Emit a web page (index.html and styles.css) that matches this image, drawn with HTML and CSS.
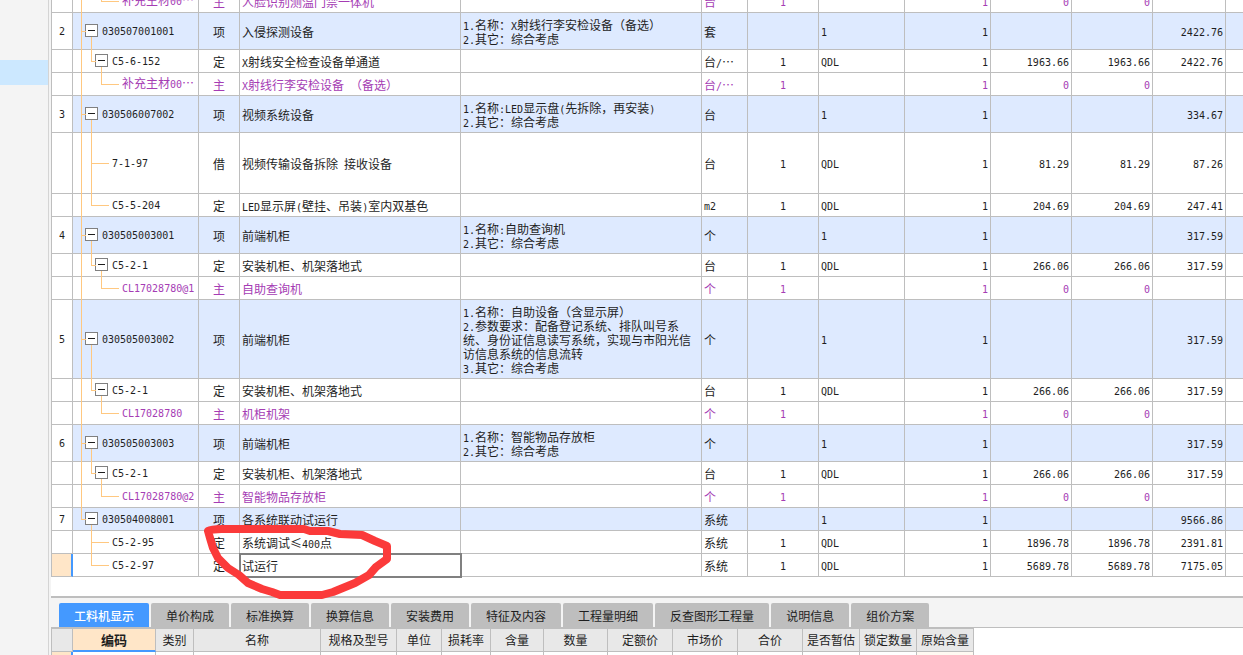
FILE: index.html
```html
<!DOCTYPE html>
<html lang="zh-CN">
<head>
<meta charset="utf-8">
<title>工料机显示</title>
<link rel="stylesheet" href="styles.css">
</head>
<body>
<div class="app">
  <aside class="sidebar"><div class="sidebar-item"></div></aside>
  <main class="main">
    <section class="items">
      <table class="grid">
        <colgroup><col class="w-no"><col class="w-code"><col class="w-type"><col class="w-name"><col class="w-feature"><col class="w-unit"><col class="w-content"><col class="w-formula"><col class="w-qty"><col class="w-price"><col class="w-price"><col class="w-total"><col></colgroup>
        <tbody>
          <tr class="main-mat"><td></td><td class="tree leaf2"><span class="cn">补充主材</span>00<span class="cn">…</span></td><td class="type">主</td><td class="cn">人脸识别测温门禁一体机</td><td></td><td class="cn">台</td><td class="mid">1</td><td></td><td class="num">1</td><td class="num">0</td><td class="num">0</td><td></td><td></td></tr>
          <tr class="item h2"><td class="no">2</td><td class="tree root"><div><button aria-label="折叠"></button>030507001001</div></td><td class="type">项</td><td class="cn">入侵探测设备</td><td class="cn feature"><span class="m">1.</span>名称：<span class="m">X</span>射线行李安检设备（备选）<br><span class="m">2.</span>其它：综合考虑</td><td class="cn">套</td><td></td><td>1</td><td class="num">1</td><td></td><td></td><td class="num">2422.76</td><td></td></tr>
          <tr><td></td><td class="tree branch"><div><button aria-label="折叠"></button>C5-6-152</div></td><td class="type">定</td><td class="cn"><span class="m">X</span>射线安全检查设备单通道</td><td></td><td class="cn">台<span class="m">/</span>…</td><td class="mid">1</td><td>QDL</td><td class="num">1</td><td class="num">1963.66</td><td class="num">1963.66</td><td class="num">2422.76</td><td></td></tr>
          <tr class="main-mat"><td></td><td class="tree leaf2"><span class="cn">补充主材</span>00<span class="cn">…</span></td><td class="type">主</td><td class="cn"><span class="m">X</span>射线行李安检设备<span class="m"> </span>（备选）</td><td></td><td class="cn">台<span class="m">/</span>…</td><td class="mid">1</td><td></td><td class="num">1</td><td class="num">0</td><td class="num">0</td><td></td><td></td></tr>
          <tr class="item h2"><td class="no">3</td><td class="tree root"><div><button aria-label="折叠"></button>030506007002</div></td><td class="type">项</td><td class="cn">视频系统设备</td><td class="cn feature"><span class="m">1.</span>名称<span class="m">:LED</span>显示盘<span class="m">(</span>先拆除，再安装<span class="m">)</span><br><span class="m">2.</span>其它：综合考虑</td><td class="cn">台</td><td></td><td>1</td><td class="num">1</td><td></td><td></td><td class="num">334.67</td><td></td></tr>
          <tr class="h3"><td></td><td class="tree leaf1"><div>7-1-97</div></td><td class="type">借</td><td class="cn">视频传输设备拆除<span class="m"> </span>接收设备</td><td></td><td class="cn">台</td><td class="mid">1</td><td>QDL</td><td class="num">1</td><td class="num">81.29</td><td class="num">81.29</td><td class="num">87.26</td><td></td></tr>
          <tr><td></td><td class="tree leaf1">C5-5-204</td><td class="type">定</td><td class="cn"><span class="m">LED</span>显示屏<span class="m">(</span>壁挂、吊装<span class="m">)</span>室内双基色</td><td></td><td>m2</td><td class="mid">1</td><td>QDL</td><td class="num">1</td><td class="num">204.69</td><td class="num">204.69</td><td class="num">247.41</td><td></td></tr>
          <tr class="item h2"><td class="no">4</td><td class="tree root"><div><button aria-label="折叠"></button>030505003001</div></td><td class="type">项</td><td class="cn">前端机柜</td><td class="cn feature"><span class="m">1.</span>名称<span class="m">:</span>自助查询机<br><span class="m">2.</span>其它：综合考虑</td><td class="cn">个</td><td></td><td>1</td><td class="num">1</td><td></td><td></td><td class="num">317.59</td><td></td></tr>
          <tr><td></td><td class="tree branch"><div><button aria-label="折叠"></button>C5-2-1</div></td><td class="type">定</td><td class="cn">安装机柜、机架落地式</td><td></td><td class="cn">台</td><td class="mid">1</td><td>QDL</td><td class="num">1</td><td class="num">266.06</td><td class="num">266.06</td><td class="num">317.59</td><td></td></tr>
          <tr class="main-mat"><td></td><td class="tree leaf2">CL17028780@1</td><td class="type">主</td><td class="cn">自助查询机</td><td></td><td class="cn">个</td><td class="mid">1</td><td></td><td class="num">1</td><td class="num">0</td><td class="num">0</td><td></td><td></td></tr>
          <tr class="item h4"><td class="no">5</td><td class="tree root"><div><button aria-label="折叠"></button>030505003002</div></td><td class="type">项</td><td class="cn">前端机柜</td><td class="cn feature"><span class="m">1.</span>名称：自助设备（含显示屏）<br><span class="m">2.</span>参数要求：配备登记系统、排队叫号系统、身份证信息读写系统，实现与市阳光信访信息系统的信息流转<br><span class="m">3.</span>其它：综合考虑</td><td class="cn">个</td><td></td><td>1</td><td class="num">1</td><td></td><td></td><td class="num">317.59</td><td></td></tr>
          <tr><td></td><td class="tree branch"><div><button aria-label="折叠"></button>C5-2-1</div></td><td class="type">定</td><td class="cn">安装机柜、机架落地式</td><td></td><td class="cn">台</td><td class="mid">1</td><td>QDL</td><td class="num">1</td><td class="num">266.06</td><td class="num">266.06</td><td class="num">317.59</td><td></td></tr>
          <tr class="main-mat"><td></td><td class="tree leaf2">CL17028780</td><td class="type">主</td><td class="cn">机柜机架</td><td></td><td class="cn">个</td><td class="mid">1</td><td></td><td class="num">1</td><td class="num">0</td><td class="num">0</td><td></td><td></td></tr>
          <tr class="item h2"><td class="no">6</td><td class="tree root"><div><button aria-label="折叠"></button>030505003003</div></td><td class="type">项</td><td class="cn">前端机柜</td><td class="cn feature"><span class="m">1.</span>名称：智能物品存放柜<br><span class="m">2.</span>其它：综合考虑</td><td class="cn">个</td><td></td><td>1</td><td class="num">1</td><td></td><td></td><td class="num">317.59</td><td></td></tr>
          <tr><td></td><td class="tree branch"><div><button aria-label="折叠"></button>C5-2-1</div></td><td class="type">定</td><td class="cn">安装机柜、机架落地式</td><td></td><td class="cn">台</td><td class="mid">1</td><td>QDL</td><td class="num">1</td><td class="num">266.06</td><td class="num">266.06</td><td class="num">317.59</td><td></td></tr>
          <tr class="main-mat"><td></td><td class="tree leaf2">CL17028780@2</td><td class="type">主</td><td class="cn">智能物品存放柜</td><td></td><td class="cn">个</td><td class="mid">1</td><td></td><td class="num">1</td><td class="num">0</td><td class="num">0</td><td></td><td></td></tr>
          <tr class="item"><td class="no">7</td><td class="tree root last"><div><button aria-label="折叠"></button>030504008001</div></td><td class="type">项</td><td class="cn">各系统联动试运行</td><td></td><td class="cn">系统</td><td></td><td>1</td><td class="num">1</td><td></td><td></td><td class="num">9566.86</td><td></td></tr>
          <tr><td></td><td class="tree leaf1 last"><div>C5-2-95</div></td><td class="type">定</td><td class="cn">系统调试≤<span class="m">400</span>点</td><td></td><td class="cn">系统</td><td class="mid">1</td><td>QDL</td><td class="num">1</td><td class="num">1896.78</td><td class="num">1896.78</td><td class="num">2391.81</td><td></td></tr>
          <tr><td class="no current"></td><td class="tree leaf1 last">C5-2-97</td><td class="type">定</td><td class="cn selected">试运行</td><td></td><td class="cn">系统</td><td class="mid">1</td><td>QDL</td><td class="num">1</td><td class="num">5689.78</td><td class="num">5689.78</td><td class="num">7175.05</td><td></td></tr>
        </tbody>
      </table>
    </section>
    <nav class="tabs">
      <button class="tab active">工料机显示</button><button class="tab">单价构成</button><button class="tab">标准换算</button><button class="tab">换算信息</button><button class="tab">安装费用</button><button class="tab">特征及内容</button><button class="tab">工程量明细</button><button class="tab">反查图形工程量</button><button class="tab">说明信息</button><button class="tab">组价方案</button>
    </nav>
    <section class="detail">
      <table class="resources">
        <colgroup><col class="r21"><col class="r83"><col class="r38"><col class="r127"><col class="r76"><col class="r45"><col class="r49"><col class="r53"><col class="r64"><col class="r65"><col class="r65"><col class="r65"><col class="r57"><col class="r57"><col class="r57"></colgroup>
        <thead><tr><th></th><th class="sorted">编码</th><th>类别</th><th>名称</th><th>规格及型号</th><th>单位</th><th>损耗率</th><th>含量</th><th>数量</th><th>定额价</th><th>市场价</th><th>合价</th><th>是否暂估</th><th>锁定数量</th><th>原始含量</th></tr></thead>
        <tbody><tr><td class="current"></td><td></td><td></td><td></td><td></td><td></td><td></td><td></td><td></td><td></td><td></td><td></td><td></td><td></td><td class="editable"></td></tr></tbody>
      </table>
    </section>
  </main>
  <svg class="mark" width="200" height="84" viewBox="200 520 200 84" aria-hidden="true"><path d="M208 531C213 528 220 529 230 529L304 529L310 531L328 531L340 534L362 535L375 541L387 546L387 559L376 567L369 575L355 583L333 592L322 595L280 595L272 592L262 589L248 583L239 575L228 568L218 558L213 548L210 538Z"/></svg>
</div>
</body>
</html>
```
FILE: styles.css
```css
* { box-sizing: border-box; }

body {
  margin: 0;
  background: #fff;
  color: #1e1e1e;
  font-family: "DejaVu Sans Mono", "Noto Sans CJK SC", monospace;
  font-size: 10px;
  line-height: 14px;
}

.app {
  display: flex;
  position: relative;
  height: 100vh;
  overflow: hidden;
}

.sidebar {
  flex: none;
  width: 49px;
  padding-top: 60px;
  background: #f4f4f4;
  border-right: 1px solid #d4d4d4;
}
.sidebar-item { height: 25px; background: #cce8ff; }

.main {
  flex: 1;
  min-width: 0;
  border-left: 2px solid #f4f4f4;
}

/* bill of quantities */
.items {
  overflow: hidden;
  padding-bottom: 19px;
  border-bottom: 2px solid #bebebe;
}
.grid, .resources {
  table-layout: fixed;
  border-collapse: separate;
  border-spacing: 0;
  border-left: 1px solid #bebebe;
}
.grid { width: 100%; margin-top: -10px; }
.w-no { width: 21px; }
.w-code { width: 126px; }
.w-type { width: 41px; }
.w-name { width: 221px; }
.w-feature { width: 241px; }
.w-unit { width: 46px; }
.w-content { width: 71px; }
.w-formula, .w-qty { width: 86px; }
.w-price { width: 81px; }
.w-total { width: 73px; }

.grid td {
  height: 23px;
  padding: 3px 2px 0;
  border-right: 1px solid #bebebe;
  border-bottom: 1px solid #bebebe;
  white-space: nowrap;
  overflow: hidden;
}
.grid .h2 td { height: 37px; }
.grid .h3 td { height: 61px; }
.grid .h4 td { height: 79px; }
.grid td:last-child { border-right: 0; }

.item td { background-color: #deeaff; }
.grid .no, .item .no { padding: 1px 0 0; text-align: center; background-color: #fff; }
.main-mat { color: #a53cb4; }

.grid .cn, .grid .type {
  padding-top: 1px;
  font-family: "Noto Sans CJK SC", sans-serif;
  font-size: 12px;
}
.grid .type, .grid .mid { text-align: center; }
.grid .num { text-align: right; }
.grid .feature { white-space: normal; padding: 1px 8px 0 2px; }
.m {
  font-family: "DejaVu Sans Mono", monospace;
  font-size: 10px;
  line-height: 0;
  white-space: pre;
}

/* tree column and its guides */
.grid .tree {
  position: relative;
  padding: 2px 0 0;
  overflow: visible;
}
.tree .cn { line-height: 0; }
.tree::before, .tree::after, .tree > div::after {
  content: "";
  position: absolute;
  top: 0;
}
.tree::before {
  left: 8px;
  bottom: -1px;
  width: 1px;
  background: #ffc880;
}
.tree::after {
  height: 50%;
  border: solid #ffc880;
  border-width: 0 0 1px 1px;
}
.tree > div::after {
  left: 18px;
  top: 50%;
  bottom: -1px;
  width: 1px;
  background: #ffc880;
}
.tree.last::before { display: none; }

.root > div, .branch > div { display: flex; align-items: center; gap: 4px; }
.grid .root { padding: 2px 0 0 12px; }
.root::after { left: 8px; width: 4px; }
.grid .branch { padding: 2px 0 0 22px; }
.branch::after { left: 18px; width: 4px; }
.branch > div::after { left: 28px; }
.root > div::after, .branch > div::after { top: calc(50% + 6px); }
.grid .leaf1 { padding-left: 39px; }
.leaf1::after { left: 18px; width: 17px; }
.grid .leaf2 { padding-left: 49px; }
.leaf2::after { left: 28px; width: 17px; }

.tree button {
  display: flex;
  align-items: center;
  justify-content: center;
  width: 13px;
  height: 13px;
  margin-bottom: 4px;
  padding: 0;
  border: 1px solid #808080;
  background: #fff;
}
.tree button::before { content: ""; width: 7px; height: 1px; background: #1e1e1e; }

.grid .current, .resources .current {
  background: #ffe6c8;
  border-right: 2px solid #4499ff;
}
.grid .selected { outline: 2px solid #808080; outline-offset: -1px; }

/* lower pane */
.tabs {
  display: flex;
  gap: 2px;
  padding: 5px 8px 0;
  background: #f4f4f4;
  border-bottom: 1px solid #bebebe;
}
.tab {
  height: 24px;
  padding: 1px 15px 0;
  border: 0;
  border-radius: 2px 2px 0 0;
  background: #bebebe;
  color: #1e1e1e;
  font: 12px/23px "Noto Sans CJK SC", sans-serif;
  white-space: nowrap;
}
.tab.active { background: #4499ff; color: #fff; font-weight: 500; }

.resources {
  width: 923px;
  font-family: "Noto Sans CJK SC", sans-serif;
  font-size: 12px;
}
.r21 { width: 21px; }
.r38 { width: 38px; }
.r45 { width: 45px; }
.r49 { width: 49px; }
.r53 { width: 53px; }
.r57 { width: 57px; }
.r64 { width: 64px; }
.r65 { width: 65px; }
.r76 { width: 76px; }
.r83 { width: 83px; }
.r127 { width: 127px; }
.resources th {
  height: 24px;
  padding: 0;
  border: 0 solid #bebebe;
  border-width: 1px 1px 1px 0;
  background: #e8e8e8;
  font-weight: 400;
  white-space: nowrap;
}
.resources .sorted {
  background: #ffe6c8;
  border-bottom: 2px solid #4499ff;
  font-size: 13px;
  font-weight: 700;
}
.resources td { height: 23px; padding: 0; border-right: 1px solid #bebebe; }
.resources .editable { background: #fffaf2; }

/* hand-drawn highlight over the sheet */
.mark {
  position: absolute;
  left: 200px;
  top: 520px;
  fill: none;
  stroke: #fb3a3a;
  stroke-width: 8px;
  stroke-linejoin: round;
  pointer-events: none;
}
```
